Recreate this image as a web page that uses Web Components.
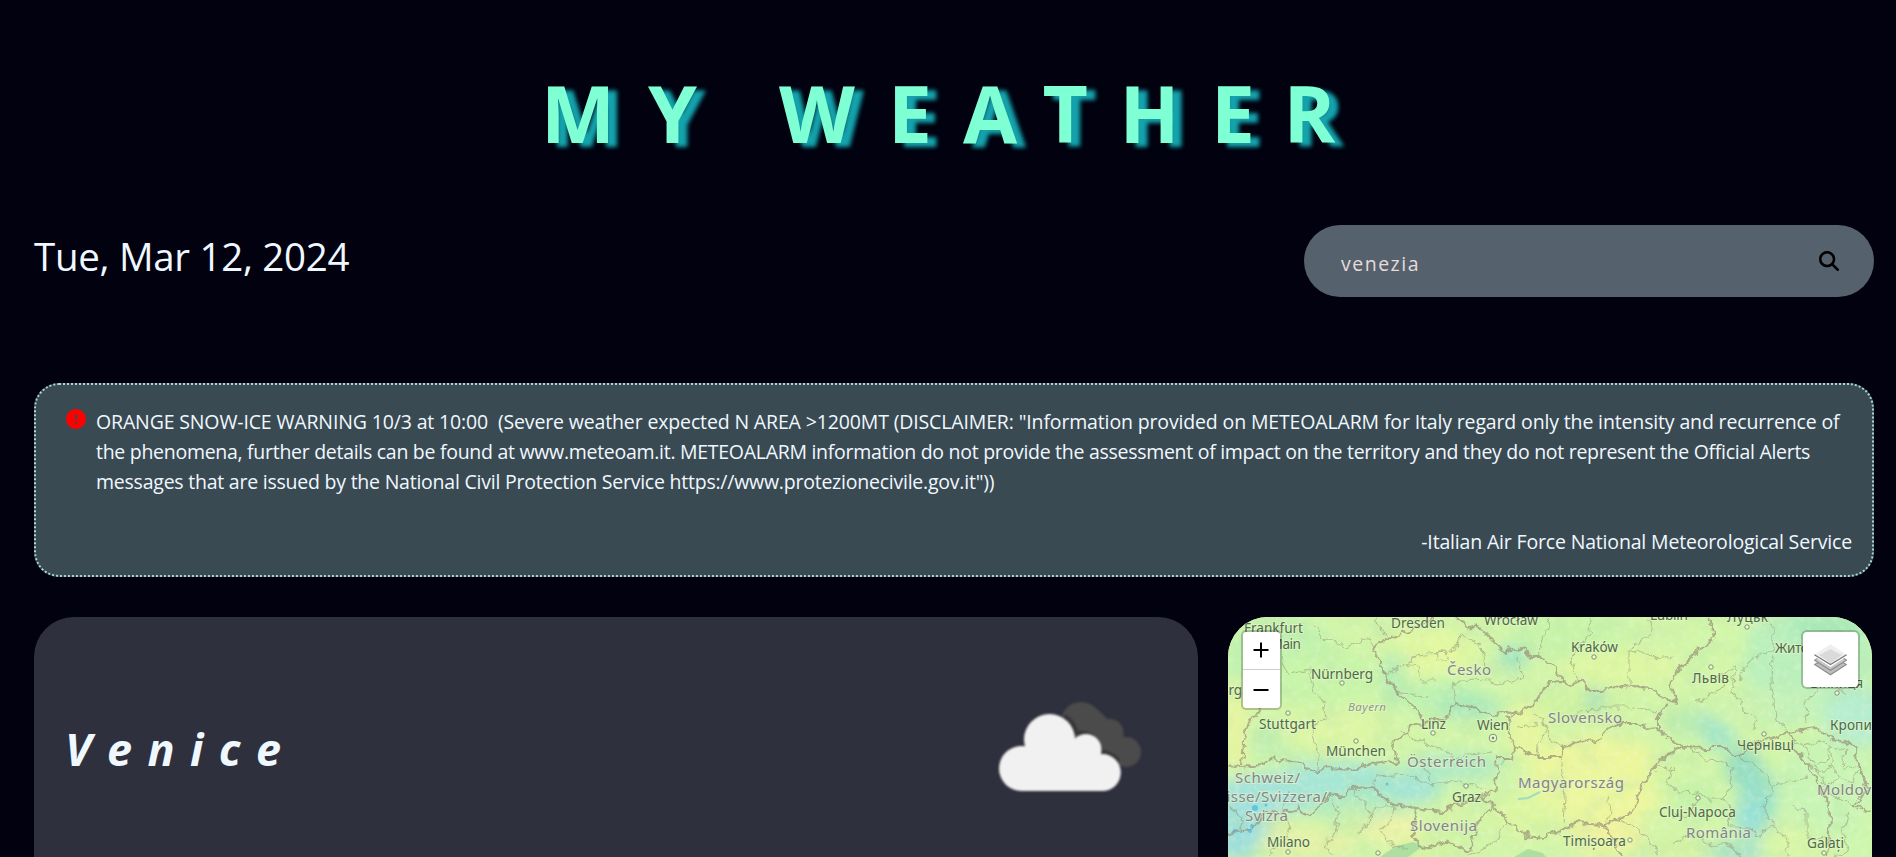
<!DOCTYPE html>
<html lang="en">
<head>
<meta charset="utf-8">
<title>My Weather</title>
<style>
html,body{margin:0;height:100%;overflow:hidden;background:#01010f;font-family:"Open Sans","Noto Sans",sans-serif;color:aliceblue}
</style>
</head>
<body>
<weather-app></weather-app>
<script>
const define=(name,html)=>customElements.define(name,class extends HTMLElement{
  constructor(){super();const t=document.createElement('template');t.innerHTML=html;
    this.attachShadow({mode:'open'}).append(t.content.cloneNode(true));}
});

define('app-title',`<style>
:host{display:block;height:225px}
h1{margin:0}
svg{display:block;overflow:visible}
text{font-size:78.500px;font-weight:700;fill:aquamarine;filter:drop-shadow(9.500px 4px 2px #14a3ad)}
</style><h1><svg width="1896" height="225"><text y="143" x="541 648 720 779 888 963 1042.500 1119.500 1211 1283.500" xml:space="preserve">MY WEATHER</text></svg></h1>`);

define('search-box',`<style>
:host{display:flex;align-items:center;justify-content:space-between;box-sizing:border-box;width:570px;height:72px;border-radius:36px;background:#55616c;padding:0 35px 0 37px}
span{font-size:19.500px;letter-spacing:1.500px;color:#e6dcdc;padding-top:4px}
svg{width:20px;height:20px}
</style><span><slot></slot></span>
<svg viewBox="0 0 512 512"><path d="M416 208c0 45.900-14.900 88.300-40 122.700L502.600 457.400c12.500 12.500 12.500 32.800 0 45.300s-32.800 12.500-45.300 0L330.700 376c-34.400 25.200-76.800 40-122.700 40C93.100 416 0 322.900 0 208S93.100 0 208 0S416 93.100 416 208zM208 352a144 144 0 1 0 0-288 144 144 0 1 0 0 288z"/></svg>`);

define('alert-box',`<style>
:host{display:block;box-sizing:border-box;height:194px;margin-top:86px;border:2px dotted #a9d6dc;border-radius:25px;background:#3a4a52;padding:22px 20px 0 30px;font-size:19.500px;line-height:30px}
.row{display:flex;gap:10px}
svg{width:20px;height:20px;margin-top:2px;flex:none}
.lines div{white-space:pre}
.l1{letter-spacing:-.145px}.l2{letter-spacing:-.285px}.l3{letter-spacing:-.23px}
footer{margin-top:30px;text-align:right;letter-spacing:-.17px}
</style>
<div class="row"><svg viewBox="0 0 512 512"><path fill="red" d="M256 512A256 256 0 1 0 256 0a256 256 0 1 0 0 512zm0-384c13.300 0 24 10.700 24 24V264c0 13.300-10.700 24-24 24s-24-10.700-24-24V152c0-13.300 10.700-24 24-24zM224 352a32 32 0 1 1 64 0 32 32 0 1 1-64 0z"/></svg>
<div class="lines"><div><span class="l1">ORANGE SNOW-ICE WARNING 10/3 at 10:00  (Severe weather expected N AREA &gt;1200MT (DISCLAIMER: "Information provided on METEOALARM for Italy regard only the intensity and recurrence of</span></div><div><span class="l2">the phenomena, further details can be found at www.meteoam.it. METEOALARM information do not provide the assessment of impact on the territory and they do not represent the Official Alerts</span></div><div><span class="l3">messages that are issued by the National Civil Protection Service https://www.protezionecivile.gov.it"))</span></div></div></div>
<footer>-Italian Air Force National Meteorological Service</footer>`);

define('cloud-icon',`<style>:host{display:block;width:180px;height:180px}svg{display:block;filter:blur(.9px)}</style>
<svg width="180" height="180" viewBox="0 0 180 180">
<g fill="#4b4b4c"><circle cx="109" cy="62" r="20"/><circle cx="137.500" cy="73" r="14"/><circle cx="154" cy="92" r="15"/><path d="M104 60 124 48 151 74 157 106 148 106 113 83z"/></g>
<path fill="none" stroke="#353638" stroke-width="4" d="M92 56Q103 62 104 73Q125 71 129.500 92Q139 92 147 101"/>
<g fill="#f1f1f1"><circle cx="49.500" cy="108.500" r="22.500"/><circle cx="77.500" cy="79.500" r="25.500"/><circle cx="114" cy="89.500" r="15.500"/><circle cx="130.300" cy="112.600" r="18.500"/><path d="M46 86.500H52L102 79 128 95 131 131H49z"/></g></svg>`);

define('city-card',`<style>
:host{display:flex;align-items:center;justify-content:space-between;box-sizing:border-box;width:1164px;height:280px;border-radius:40px;background:#2f303d;padding:0 46px 14px 31px}
h2{margin:-3px 0 0;font-size:45px;font-style:italic;font-weight:700;letter-spacing:15.400px}
</style><h2><slot></slot></h2><cloud-icon></cloud-icon>`);

const major=[
"M145 31 159 21 182 15 195 5 205 0","M145 31 155 48 155 58 169 75 185 91 200 105 217 101 227 87 249 91 259 97 279 96 294 94 307 85 317 71 322 66 334 65 340 68 354 62 362 75 372 75 382 69 395 70 409 68 422 72 435 80 449 86",
"M228 0 232 5 255 13 265 25 279 38 282 30 299 35 302 41 312 41 327 50 334 61 340 68","M449 86 444 71 445 61 462 41 482 25 485 15 480 0",
"M440 86 430 101 430 111 445 125 457 130 479 131 497 131 509 140 525 128 545 121 560 115 572 138 585 158 599 181 602 201 599 240",
"M430 111 422 112 409 106 394 106 380 113 372 123 352 124 335 130 332 140 309 140 285 130","M294 94 280 101 282 118 285 130 284 141 269 141 270 155 267 171 255 181 227 188 212 195 189 191 164 188 145 170 125 171 115 180 102 178",
"M255 181 265 188 282 205 299 218 315 221 329 215 349 206 375 208 392 201 404 195 412 175 427 151 440 138 457 130","M375 208 389 228 393 240",
"M560 115 589 111 605 121 629 131 630 151 640 171 625 188 644 196","M200 105 182 108 179 118 164 125 170 145 169 150 162 144 142 146 125 153 99 151 89 156 72 146 45 141 34 148 0 151","M14 148 17 115 32 91 26 60",
"M189 191 187 205 185 221 195 233 215 225 242 235 249 205 265 190","M0 218 25 211 37 195 64 196 69 191 82 198 92 188 102 178"];
const minor=[
"M155 58 178 48 195 36 225 35 233 18 253 28 260 55","M208 64 192 64 190 50 178 48","M227 87 224 66 245 62 278 66 295 60 290 40","M169 75 200 80","M86 10 95 22 120 30 140 20 145 31","M60 58 82 52 85 70 95 85 98 100 84 112 90 135 89 156","M54 40 60 58","M148 0 152 14 159 21",
"M172 115 200 128 218 134 229 140 265 135","M145 170 148 160 180 158 200 168 230 165 258 172","M204 168 198 150 190 145","M105 182 110 200 108 215 98 223 104 240","M140 200 150 190 165 190 163 205 154 212 160 225 180 232","M125 171 135 185 145 200 130 215","M60 175 55 190 62 210 58 220 40 240","M10 215 15 200 2 188",
"M308 95 318 110 310 128 309 140","M322 0 316 20 312 40","M360 0 363 18 352 25 343 45 350 62","M401 68 401 32 420 20 422 0","M401 32 430 42 445 40","M470 85 478 78 493 72 492 58 508 50","M508 50 505 75 515 92 527 98 526 112","M512 62 520 45 545 32 545 10 530 0","M545 32 544 70 548 100 560 115","M579 105 578 85 600 60 618 80","M340 100 370 90 400 90 430 96","M315 102 322 120 335 130",
"M332 140 337 180 335 206","M375 208 385 195 380 180","M431 149 445 152 440 165 450 176 470 175 480 182 492 182 503 170 505 148 479 142 460 130","M470 175 462 198 445 200","M492 182 505 192 500 210 520 210 530 220 545 208 535 188 545 170 580 160","M545 170 530 150 509 140","M392 201 420 220 430 240","M445 225 470 218 485 230 498 225 512 240","M564 188 580 196 580 220 599 222","M545 208 560 225 560 240","M240 240 265 225 282 205","M290 110 310 108",
"M564 122 577 130 590 122 602 130 598 145 580 150","M577 130 590 155 605 150 602 130 618 133 615 150 630 151","M590 155 597 170 612 160 605 150M612 160 625 165 630 151M597 170 606 180 625 188M577 145 590 155M622 195 615 215 620 235 605 240","M208 38a6 4 0 1 0 12 2a6 4 0 1 0-12-2"];
// label: text, x, baseline, width, kind (c = country, i = region)
const L=[
["Frankfurt",16,16,59],["am Main",20,32,53],["Dresden",163,11,54],["Wrocław",256,8,54],["Lublin",422,3,38],["Луцьк",499,5,41],["Kraków",343,35,47],["Львів",464,66,37],["Житомир",547,36,60],["Вінниця",582,71,53],["Кропивницький",602,113,107],["Чернівці",509,133,57],["Slovensko",320,106,74,'c'],["Česko",219,58,44,'c'],["Nürnberg",83,62,62],["Strasbourg",-54,78,68],["Bayern",120,94,38,'i'],["Stuttgart",31,112,57],["München",98,139,60],["Linz",193,112,25],["Wien",249,113,32],["Österreich",179,150,79,'c'],["Schweiz/",7,166,65,'c'],["Suisse/Svizzera/",-20,185,119,'c'],["Svizra",17,204,43,'c'],["Milano",39,230,43],["Graz",224,185,29],["Slovenija",182,214,67,'c'],["Magyarország",290,171,106,'c'],["Cluj-Napoca",431,200,77],["România",458,221,65,'c'],["Timișoara",335,229,63],["Galați",579,231,37],["Moldova",589,178,63,'c']];
const dots=[[114,66],[60,96],[128,124],[205,116],[238,169],[60,235],[150,236],[366,40],[519,10],[483,50],[609,76],[536,117],[470,181],[402,223],[596,236]];
// temperature patches: cx, cy, rx, ry, colour
const blobs=[
[50,40,60,40,'#c0f2ae'],[100,60,50,30,'#c8f5a8'],[200,35,50,25,'#e2f8a0'],[215,80,40,18,'#bdf3b0'],[60,125,40,20,'#c0f0b0'],[8,110,8,50,'#eef49c'],[110,115,60,25,'#dcf6a4'],[165,60,12,30,'#b4ecb4'],
[285,40,14,12,'#9ae2c4'],[240,90,35,12,'#a9e8bc'],[345,20,60,25,'#c8f4a8'],[390,50,60,20,'#def7a2'],[350,90,50,15,'#cdf2a0'],
[60,175,75,20,'#a4e3dc'],[20,205,40,20,'#9fe0dc'],[110,160,60,16,'#a6e6d6'],[165,172,50,16,'#a2e4d4'],[225,150,50,14,'#b0eac4'],[130,190,50,14,'#b4ebbc'],[10,230,20,12,'#9adce0'],
[80,225,50,12,'#e8f1a4'],[50,205,14,8,'#d8ee9c'],[165,212,30,16,'#edf3a6'],[205,230,30,12,'#d0f2a0'],[125,205,10,15,'#cff0a4'],[225,198,20,6,'#d8f0a0'],
[300,115,20,30,'#e6f69e'],[370,165,70,48,'#ecf69c'],[300,200,40,20,'#dcf6a0'],[380,220,40,16,'#f0f29c'],[440,160,22,16,'#d4f5a4'],
[460,105,22,16,'#b9ecb0'],[492,120,16,12,'#9de4cc'],[515,150,18,20,'#94dcc0'],[530,180,18,30,'#93dfcc'],[540,220,14,18,'#9adfd4'],[520,200,14,20,'#98e0d8'],[480,105,10,8,'#a2e4cc'],
[510,235,30,8,'#98dcd4'],[450,232,25,10,'#d2f0a0'],[465,180,25,18,'#c4f2a8'],[368,82,6,10,'#7fd0cc'],
[580,40,70,50,'#baf0bc'],[560,90,50,20,'#c4f2b8'],[630,100,35,30,'#b6eed0'],[520,90,25,14,'#cff4b0'],[490,30,30,25,'#d2f7a8'],[600,170,50,50,'#c8f4b4'],[560,225,30,20,'#d8f6a6'],[630,225,20,20,'#cdf6ae'],[600,10,40,14,'#a6e8b8']];
define('leaflet-map',`<style>
:host{display:block;position:relative;width:644px;height:280px;border-radius:40px;overflow:hidden;background:#d0f4a8}
svg.m{display:block;font-family:"Noto Sans",sans-serif;font-size:13.600px}
text{fill:#50694a;stroke:#e6f8cc;stroke-opacity:.6;stroke-width:2px;paint-order:stroke}
.c{fill:#84838c;font-size:15px}.i{fill:#93998a;font-style:italic;font-size:11.500px}
.zoom{position:absolute;left:12.500px;top:12.500px;width:37.500px;border:2.500px solid rgba(0,0,0,.2);border-radius:5px;background:#fff;background-clip:padding-box}
.zoom div{height:37.500px;display:flex;align-items:center;justify-content:center}
.zoom div+div{border-top:1px solid #ccc}
.layers{position:absolute;right:12px;top:12.500px;width:55px;height:55px;border:2.500px solid rgba(0,0,0,.2);border-radius:6px;background:#fff;background-clip:padding-box;display:flex;align-items:center;justify-content:center}
</style>
<svg class="m" width="644" height="240" viewBox="0 0 644 240">
<defs><filter id="b" x="-50%" y="-50%" width="200%" height="200%"><feGaussianBlur stdDeviation="8"/></filter>
<filter id="t" x="0" y="0" width="100%" height="100%"><feTurbulence type="fractalNoise" baseFrequency=".035 .045" numOctaves="5" seed="7"/><feColorMatrix values="0 0 0 0 .46  0 0 0 0 .76  0 0 0 0 .4  0 3.200 0 0 -1.500"/></filter>
<filter id="h" x="0" y="0" width="100%" height="100%"><feTurbulence type="fractalNoise" baseFrequency=".15" numOctaves="4" seed="3"/><feColorMatrix values="0 0 0 0 .96  0 0 0 0 1  0 0 0 0 .85  2 0 0 0 -.9"/></filter>
<filter id="d" filterUnits="userSpaceOnUse" x="0" y="-5" width="644" height="250"><feTurbulence type="fractalNoise" baseFrequency=".11" numOctaves="3" seed="5"/><feDisplacementMap in="SourceGraphic" scale="10" xChannelSelector="R" yChannelSelector="G"/><feGaussianBlur stdDeviation=".35"/></filter></defs>
<rect width="644" height="240" fill="#d2f5a8"/>
<g filter="url(#b)">${blobs.map(b=>`<ellipse cx="${b[0]}" cy="${b[1]}" rx="${b[2]}" ry="${b[3]}" fill="${b[4]}"/>`).join('')}</g>
<rect width="644" height="240" filter="url(#t)" opacity=".24"/><rect width="644" height="240" filter="url(#h)" opacity=".25"/>
<path d="M152 240 168 229 185 225 195 229 180 240zM286 240 300 232 315 236 318 240z" fill="#acdfa0"/>
<g fill="#62c3e8"><circle cx="27" cy="191" r="3"/><circle cx="24" cy="209" r="2"/><circle cx="22" cy="214" r="2"/><circle cx="7" cy="214" r="2"/><circle cx="38" cy="188" r="1.500"/><circle cx="159" cy="167" r="1.500"/></g>
<path d="M290 182 300 181 312 175M273 148 277 142" fill="none" stroke="#9fdcc0" stroke-width="2"/>
<g fill="none" stroke-linejoin="round" filter="url(#d)"><path stroke="#8d8f74" stroke-opacity=".5" stroke-width="1.100" d="${minor.join('')}"/><path stroke="#968c74" stroke-opacity=".68" stroke-width="2" d="${major.join('')}"/></g>
<g fill="#eefbd8" stroke="#7c946c">${dots.map(d=>`<circle cx="${d[0]}" cy="${d[1]}" r="2.200"/>`).join('')}<circle cx="265" cy="121" r="3.800"/><circle cx="265" cy="121" r="1" fill="#50694a"/></g>
${L.map(l=>`<text x="${l[1]}" y="${l[2]}" textLength="${l[3]}" class="${l[4]||''}">${l[0]}</text>`).join('')}
</svg>
<div class="zoom"><div><svg width="16" height="16"><path d="M8 .5V15.500M.5 8H15.500" stroke="#000" stroke-width="2"/></svg></div><div><svg width="16" height="16"><path d="M.5 9H15.500" stroke="#000" stroke-width="2"/></svg></div></div>
<div class="layers"><svg width="33" height="33" viewBox="0 0 26 26"><g stroke-width=".9"><path fill="#bdbdbd" stroke="#8c8c8c" d="M.5 17 13 10 25.500 17 13 25z"/><path fill="#c8c8c8" stroke="#8c8c8c" d="M.5 13.500 13 6 25.500 13.500 13 21.500z"/><path fill="#fff" stroke="#fff" d="M.5 10.300 13 3 25.500 10.300 13 18.300z"/><path fill="#efefef" d="M.5 9 13 1 25.500 9 13 17z"/><path fill="#dadada" d="M4 9.500 13 5 22 9.500 13 16z"/><path fill="none" stroke="#777" d="M.3 9.300 13 17 25.700 9.300"/></g></svg></div>`);

define('weather-app',`<style>
:host{display:block;height:857px;overflow:hidden}
main{padding:0 22px 0 34px}
.top{display:flex;justify-content:space-between}
time{font-size:38.500px;line-height:52px;padding-top:5px;letter-spacing:-.3px}
.cards{display:flex;gap:30px;margin-top:40px}
</style><app-title></app-title>
<main><div class="top"><time>Tue, Mar 12, 2024</time><search-box>venezia</search-box></div>
<alert-box></alert-box>
<div class="cards"><city-card>Venice</city-card><leaflet-map></leaflet-map></div></main>`);
</script>
</body>
</html>
